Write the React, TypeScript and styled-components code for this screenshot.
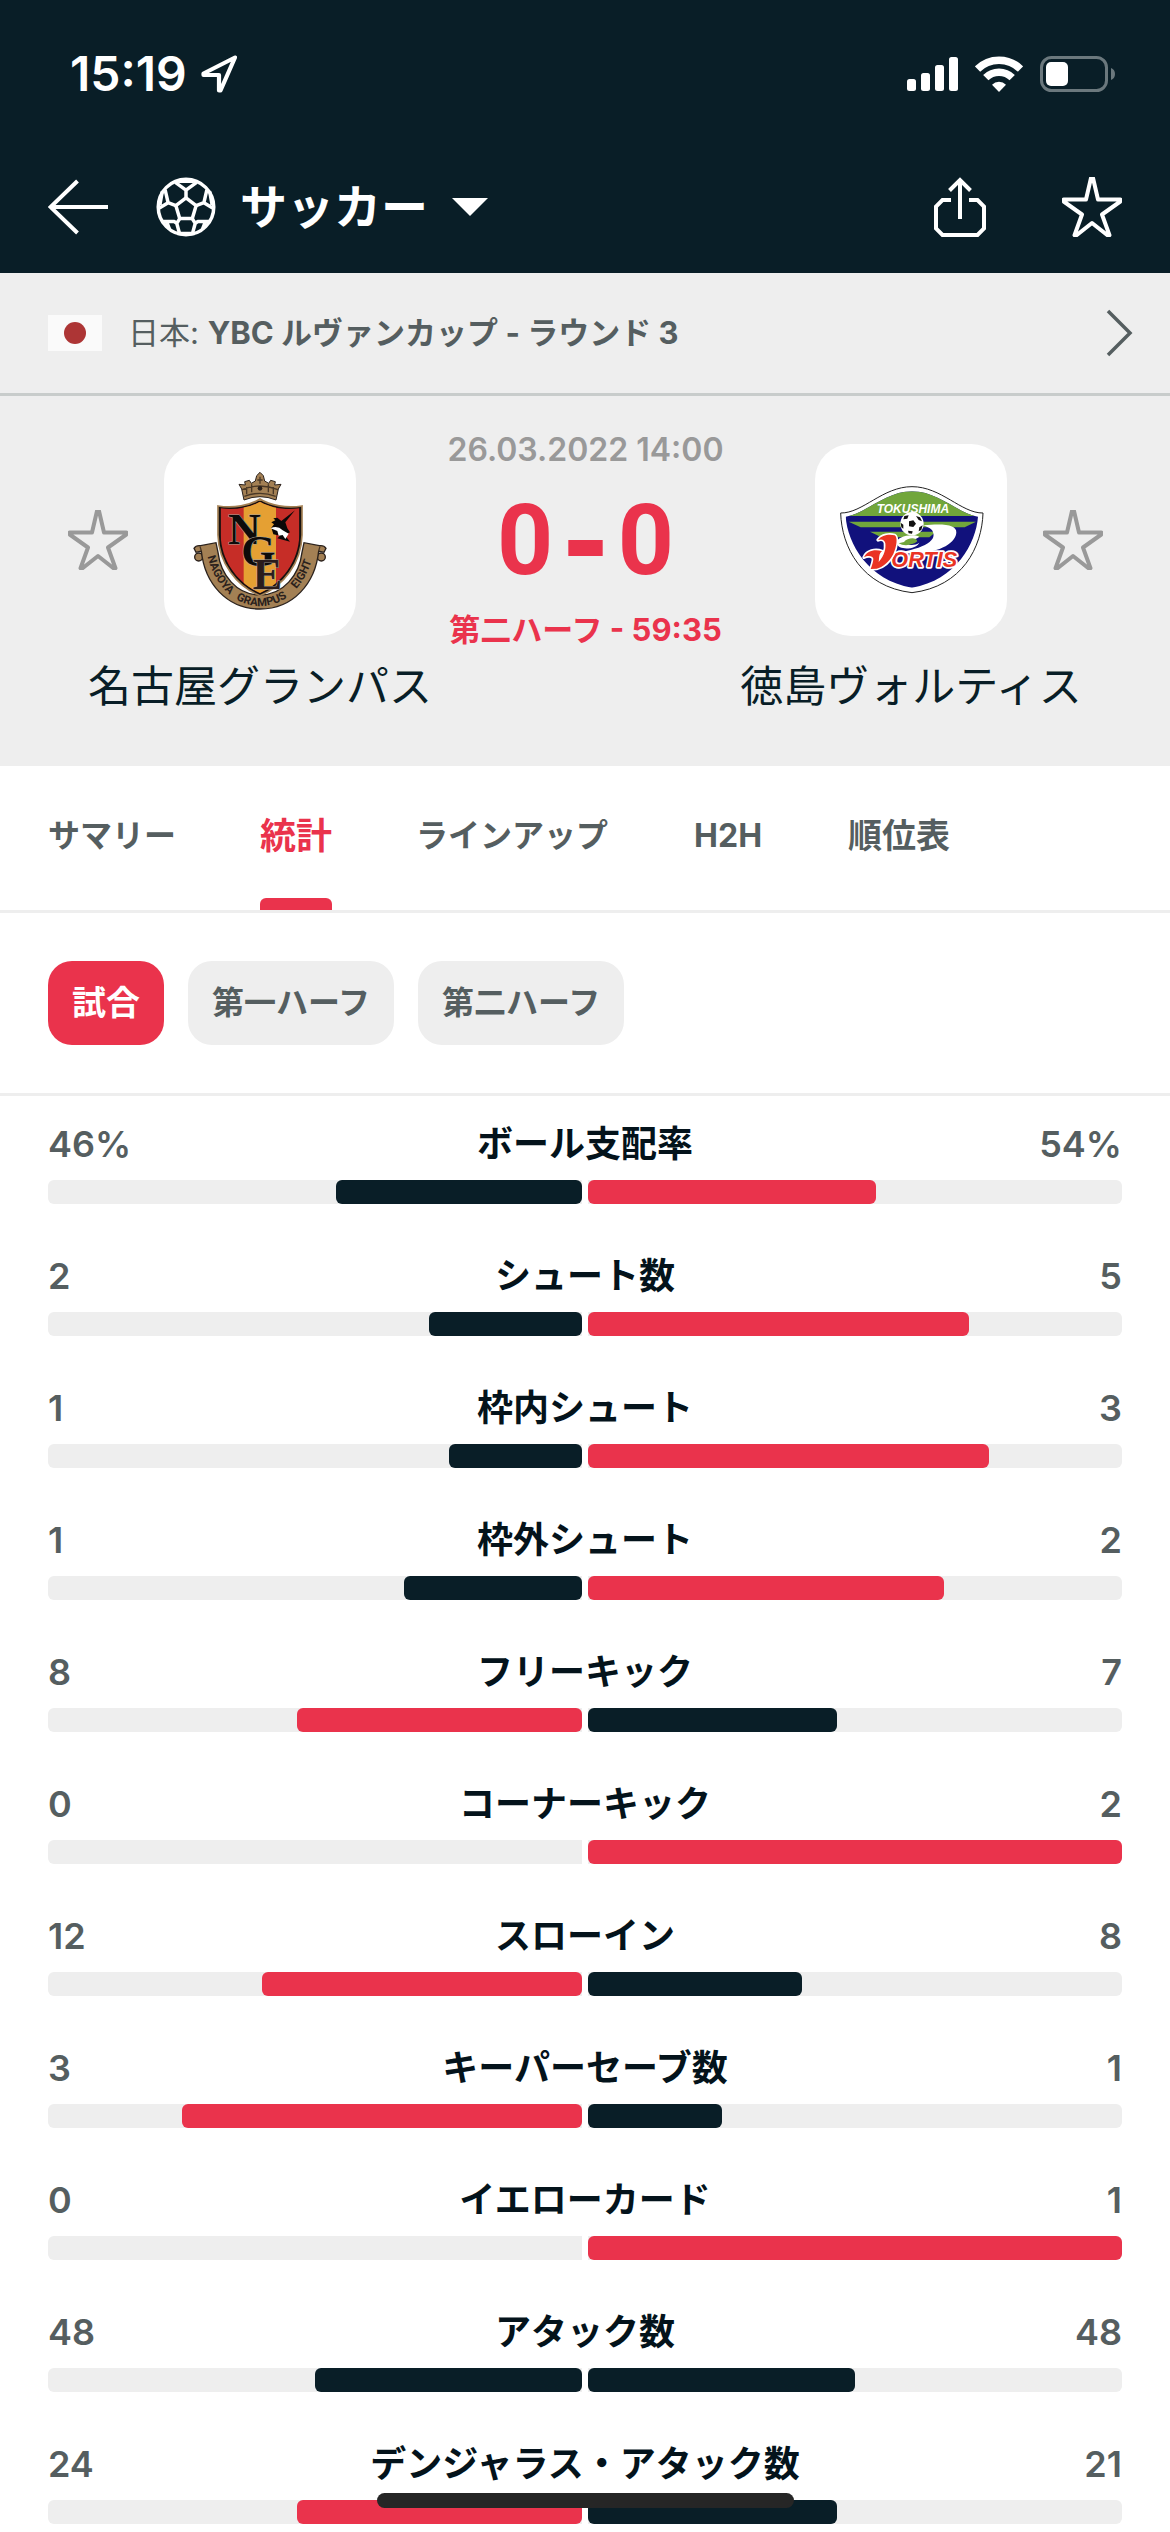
import React, { useState } from "react";
import styled, { createGlobalStyle } from "styled-components";

const color = {
  navy: "#091e27",
  ink: "#04131b",
  red: "#ea334c",
  slate: "#555e60",
  grey: "#999999",
  panel: "#eeeeee",
  rule: "#c8cccb",
  white: "#ffffff",
};

const GlobalStyle = createGlobalStyle`
  * { box-sizing: border-box; }
  body {
    margin: 0;
    background: ${color.white};
    color: ${color.ink};
    font-family: Inter, "Noto Sans CJK JP", sans-serif;
  }
  button {
    margin: 0;
    padding: 0;
    border: 0;
    background: none;
    color: inherit;
    font: inherit;
    cursor: pointer;
  }
  svg { display: block; flex: none; }
`;

const Page = styled.div`
  display: flex;
  flex-direction: column;
  padding-bottom: 8px;
  overflow: hidden;
`;

const Header = styled.header`
  padding-bottom: 8px;
  background: ${color.navy};
  color: ${color.white};
`;

const StatusBar = styled.div`
  display: flex;
  align-items: center;
  justify-content: space-between;
  height: 148px;
  padding: 0 55px 0 70px;
`;

const Clock = styled.div`
  display: flex;
  align-items: center;
  gap: 14px;
  font-size: 48px;
  font-weight: 600;
  line-height: 48px;
`;

const Indicators = styled.div`
  display: flex;
  align-items: center;
  gap: 17px;
`;

const NavBar = styled.nav`
  display: flex;
  align-items: center;
  height: 117px;
  padding: 0 48px;
`;

const SportButton = styled.button`
  display: flex;
  align-items: center;
  margin: 0 auto 0 48px;
  font-size: 47px;
  font-weight: 700;
  line-height: 60px;
  white-space: nowrap;
`;

const SportName = styled.span`
  margin: 0 24px;
`;

const NavActions = styled.div`
  display: flex;
  align-items: center;
  gap: 76px;
`;

const League = styled.a`
  display: flex;
  align-items: center;
  height: 123px;
  padding: 0 36px 0 48px;
  background: ${color.panel};
  border-bottom: 3px solid ${color.rule};
  color: ${color.slate};
  font-size: 31px;
  line-height: 40px;
  text-decoration: none;
`;

const Flag = styled.span`
  display: flex;
  align-items: center;
  justify-content: center;
  width: 54px;
  height: 36px;
  margin-right: 26px;
  background: #fafafa;

  &::before {
    content: "";
    width: 22px;
    height: 22px;
    border-radius: 50%;
    background: #ad3535;
  }
`;

const LeagueName = styled.span`
  flex: 1;
  white-space: nowrap;
`;

const Match = styled.section`
  display: grid;
  grid-template-columns: auto minmax(0, 1fr) auto;
  padding: 0 67px 56px 68px;
  background: ${color.panel};
`;

const Team = styled.div`
  display: grid;
  grid-template-columns: 60px 192px 60px;
  gap: 26px 36px;
  align-items: center;
  padding-top: 48px;
  color: ${color.grey};
`;

const CrestCard = styled.div`
  display: flex;
  align-items: center;
  justify-content: center;
  grid-column: 2;
  grid-row: 1;
  height: 192px;
  border-radius: 36px;
  background: ${color.white};
`;

const Favourite = styled.button<{ $side: "left" | "right" }>`
  grid-column: ${(p) => (p.$side === "left" ? 1 : 3)};
  grid-row: 1;
`;

const TeamName = styled.h2`
  grid-column: 1 / -1;
  margin: 0;
  color: ${color.navy};
  font-size: 43px;
  font-weight: 400;
  line-height: 48px;
  text-align: center;
  white-space: nowrap;
`;

const Center = styled.div`
  display: flex;
  flex-direction: column;
  align-items: center;
  padding-top: 34px;
  font-size: 32px;
  font-weight: 600;
  line-height: 40px;
  white-space: nowrap;
`;

const Kickoff = styled.time`
  color: ${color.grey};
`;

const Score = styled.div`
  display: flex;
  align-items: center;
  gap: 9px;
  margin: 36px 0 34px;
  color: ${color.red};
  font-family: Roboto, sans-serif;
  font-size: 98px;
  font-weight: 700;
  line-height: 70px;
`;

const ScoreDash = styled.span`
  font-family: "DejaVu Sans", sans-serif;
  font-size: 112px;
`;

const Phase = styled.div`
  color: ${color.red};
  font-size: 31px;
  font-weight: 700;
`;

const Tabs = styled.div`
  display: flex;
  gap: 84px;
  height: 147px;
  padding: 0 48px;
  border-bottom: 3px solid ${color.panel};
`;

const Tab = styled.button<{ $active: boolean; $size: number }>`
  display: flex;
  flex-direction: column;
  align-items: center;
  justify-content: space-between;
  min-width: 72px;
  padding-top: 46px;
  color: ${(p) => (p.$active ? color.red : color.slate)};
  font-size: ${(p) => p.$size}px;
  font-weight: 700;
  line-height: 48px;
  white-space: nowrap;

  &::after {
    content: "";
    width: 100%;
    height: 12px;
    border-radius: 6px 6px 0 0;
    background: ${(p) => (p.$active ? color.red : "transparent")};
  }
`;

const Chips = styled.div`
  display: flex;
  gap: 24px;
  padding: 48px;
  border-bottom: 3px solid ${color.panel};
`;

const Chip = styled.button<{ $active: boolean }>`
  height: 84px;
  padding: 0 24px;
  border-radius: 24px;
  background: ${(p) => (p.$active ? color.red : color.panel)};
  color: ${(p) => (p.$active ? color.white : color.slate)};
  font-size: ${(p) => (p.$active ? 34 : 32)}px;
  font-weight: 700;
  line-height: 84px;
  white-space: nowrap;
`;

const Stats = styled.ul`
  display: flex;
  flex-direction: column;
  gap: 48px;
  margin: 0;
  padding: 24px 48px 0;
  list-style: none;
`;

const StatText = styled.div`
  display: grid;
  grid-template-columns: 1fr auto 1fr;
  margin-bottom: 12px;
  font-size: 36px;
  line-height: 48px;
`;

const StatValue = styled.span<{ $end?: boolean }>`
  color: ${color.slate};
  font-weight: 600;
  text-align: ${(p) => (p.$end ? "right" : "left")};
`;

const StatLabel = styled.span`
  font-weight: 700;
  white-space: nowrap;
`;

const Bars = styled.div`
  display: grid;
  grid-template-columns: 1fr 1fr;
  gap: 6px;
`;

const Track = styled.div<{ $side: "home" | "away" }>`
  display: flex;
  justify-content: ${(p) => (p.$side === "home" ? "flex-end" : "flex-start")};
  height: 24px;
  border-radius: ${(p) => (p.$side === "home" ? "6px 0 0 6px" : "0 6px 6px 0")};
  background: ${color.panel};
`;

const Fill = styled.div<{ $lead: boolean }>`
  border-radius: 6px;
  background: ${(p) => (p.$lead ? color.red : color.navy)};
`;

const HomeIndicator = styled.div`
  position: fixed;
  bottom: 24px;
  left: 50%;
  width: 417px;
  height: 15px;
  margin-left: -208px;
  border-radius: 8px;
  background: #262626;
`;

const StarIcon = () => (
  <svg width="60" height="60" viewBox="0 0 60 60" fill="none" stroke="currentColor" strokeWidth="4">
    <path
      d="M29 1h2L36 22.500H58.300V24.500L40 37.500 47.500 58.200 46.500 59 30 46 13.500 59 12.500 58.200 20 37.500 1.700 24.500V22.500H24Z"
      strokeLinejoin="round"
    />
  </svg>
);

const LocationIcon = () => (
  <svg width="37" height="38" viewBox="0 0 37 38" fill="none" stroke="#fff" strokeWidth="4.200" strokeLinejoin="round">
    <path d="M34 2.500 2.500 18.500V20H18V35.500H19.500Z" />
  </svg>
);

const SignalIcon = () => (
  <svg width="51" height="34" viewBox="0 0 51 34" fill="#fff">
    <rect x="0" y="22" width="9" height="12" rx="2.500" />
    <rect x="14" y="16" width="9" height="18" rx="2.500" />
    <rect x="28" y="8" width="9" height="26" rx="2.500" />
    <rect x="42" y="0" width="9" height="34" rx="2.500" />
  </svg>
);

const WifiIcon = () => (
  <svg width="48" height="36" viewBox="0 0 48 36" fill="none" stroke="#fff" strokeWidth="7.500">
    <path d="M2.500 13A30.500 30.500 0 0 1 45.500 13" />
    <path d="M10.800 21.700A18.700 18.700 0 0 1 37.200 21.700" />
    <path d="M17 28.700a10 10 0 0 1 14 0l-7 7.300Z" fill="#fff" stroke="none" />
  </svg>
);

const BatteryIcon = () => (
  <svg width="75" height="36" viewBox="0 0 75 36">
    <rect x="1.500" y="1.500" width="65" height="33" rx="10" fill="none" stroke="#6b787d" strokeWidth="3" />
    <path d="M71 12a6.500 6.500 0 0 1 0 12Z" fill="#6b787d" />
    <rect x="6" y="6" width="22" height="24" rx="5" fill="#fff" />
  </svg>
);

const BackIcon = () => (
  <svg width="60" height="56" viewBox="0 0 60 56" fill="none" stroke="#fff" strokeWidth="4">
    <path d="M2 28H60M29.500 2 2.500 28 29.500 54" />
  </svg>
);

const BallIcon = () => (
  <svg width="60" height="60" viewBox="0 0 62 62" fill="none" stroke="#fff" strokeWidth="3.600" strokeLinejoin="round">
    <circle cx="31" cy="31" r="28.700" />
    <path d="M31 21.500 41.500 29.500 37.500 43H24.500L20.500 29.500Z" />
    <path d="M31 21.500V13.500L20 5.500M31 13.500 42 5.500M23 4.500h16" />
    <path d="M20.500 29.500 12.500 26.500 3.500 32M12.500 26.500 9.500 13.500M6.500 15 4 29" />
    <path d="M41.500 29.500 49.500 26.500 58.500 32M49.500 26.500 52.500 13.500M55.500 15 58 29" />
    <path d="M24.500 43 21.500 48 24.500 59M21.500 48 19 46H6M14 54 11 46" />
    <path d="M37.500 43 40.500 48 37.500 59M40.500 48 43 46H56M48 54 51 46M22 58.500H40" />
  </svg>
);

const CaretIcon = () => (
  <svg width="36" height="18" viewBox="0 0 36 18" fill="#fff">
    <path d="M0 0H36L18 18Z" />
  </svg>
);

const ShareIcon = () => (
  <svg width="52" height="60" viewBox="0 0 52 60" fill="none" stroke="#fff" strokeWidth="4">
    <path d="M17 23H8.500L2 29.500V51.500L8.500 58H43.500L50 51.500V29.500L43.500 23H35" />
    <path d="M26 42V3M15.500 13.500 26 3 36.500 13.500" />
  </svg>
);

const ChevronIcon = () => (
  <svg width="28" height="48" viewBox="0 0 28 48" fill="none" stroke="currentColor" strokeWidth="3.500">
    <path d="M2 2 24 24 2 46" />
  </svg>
);

const NagoyaCrest = () => (
  <svg width="140" height="150" viewBox="0 0 420 450" role="img" aria-label="名古屋グランパス">
    <defs>
      <clipPath id="nagoya-shield">
        <path d="M210 110C180 128 135 136 92 130V210C94 290 145 356 210 384 275 356 326 290 328 210V130C285 136 240 128 210 110Z" />
      </clipPath>
      <path id="nagoya-ribbon" d="M49 256C66 350 126 423 210 423 294 423 354 350 373 256" />
    </defs>
    <g fill="#a38054" stroke="#2a211c" strokeWidth="4">
      <circle cx="26" cy="276" r="12" />
      <circle cx="394" cy="276" r="12" />
      <path d="M12 250Q18 240 32 242L78 233 84 262C92 330 140 390 210 390 280 390 328 330 336 262L342 233 388 242Q402 240 408 250L402 262 386 258C376 355 310 432 210 432 110 432 44 355 34 258L18 262Z" />
      <path d="M162 105 155 72 147 58 166 60 164 50 178 46 184 55 196 48 200 32 210 22 220 32 224 48 236 55 242 46 256 50 254 60 273 58 265 72 258 105Q210 85 162 105Z" strokeWidth="3" />
    </g>
    <g fill="none" stroke="#4a3826" strokeWidth="4">
      <path d="M156 74Q210 52 264 74M163 94Q210 76 257 94M185 58V82M235 58V82M170 66V88M250 66V88M202 45H218M210 35V56" />
      <path d="M34 258 30 244M386 258 390 244" />
    </g>
    <circle cx="210" cy="70" r="7" fill="#2a211c" />
    <path d="M210 102C180 122 130 130 84 123V210C86 294 140 364 210 392 280 364 334 294 336 210V123C290 130 240 122 210 102Z" fill="#17110f" stroke="#a38054" strokeWidth="5" />
    <g clipPath="url(#nagoya-shield)">
      <path fill="#c62d27" d="M80 100H340V390H80Z" />
      <path fill="#e5a033" d="M161 100H258V390H161Z" />
    </g>
    <path d="M315 136 286 172 292 190 300 202 284 210 300 230 262 220 270 212 250 208 244 188 252 178 244 172 256 166 250 160 262 158 274 168Z" fill="#0b0908" />
    <path d="M242 190Q262 180 278 196L296 206 286 222 278 210 266 212 262 198Z" fill="#fff" />
    <g fill="#0d0b0a" stroke="#a7a09a" strokeWidth="3" fontFamily="Liberation Serif, serif" fontWeight="700" paintOrder="stroke">
      <text x="114" y="236" fontSize="136">N</text>
      <text x="154" y="302" fontSize="132">G</text>
      <text x="188" y="372" fontSize="132" fill="#2a1d1c">E</text>
    </g>
    <g fill="#2a211c" fontFamily="Roboto, sans-serif" fontSize="34" fontWeight="700" textAnchor="middle">
      <text><textPath href="#nagoya-ribbon" startOffset="17%">NAGOYA</textPath></text>
      <text><textPath href="#nagoya-ribbon" startOffset="51%">GRAMPUS</textPath></text>
      <text><textPath href="#nagoya-ribbon" startOffset="84%">EIGHT</textPath></text>
    </g>
  </svg>
);

const TokushimaCrest = () => (
  <svg width="150" height="120" viewBox="0 0 450 360" role="img" aria-label="徳島ヴォルティス">
    <defs>
      <clipPath id="tokushima-shield">
        <path d="M29 110C90 100 150 34 228 34S366 100 426 110C420 190 360 300 228 323 96 300 35 190 29 110Z" />
      </clipPath>
    </defs>
    <path d="M14 99C80 100 140 20 228 20S376 100 441 99C438 200 380 320 228 338 76 320 17 200 14 99Z" fill="#fff" stroke="#222" strokeWidth="3" />
    <g clipPath="url(#tokushima-shield)">
      <path fill="#11117c" d="M0 0H450V360H0Z" />
      <path fill="#71a63b" d="M0 0H450V108H0Z" />
      <path fill="#71a63b" d="M38 125H420L386 142H74ZM102 155H300L280 172H136Z" />
    </g>
    <path d="M262 136C330 130 362 136 361 158 358 194 300 220 226 220L150 222C240 214 300 190 292 160 290 146 276 142 262 136Z" fill="#fff" />
    <path d="M250 170C226 160 180 170 182 190 186 212 240 210 250 188 240 196 214 198 214 188 216 178 240 180 250 170Z" fill="#fff" />
    <path d="M188 190C204 200 230 196 244 184 240 170 214 174 204 186Z" fill="#71a63b" />
    <circle cx="228" cy="131" r="35" fill="#fff" />
    <path d="M219 124 232 121 240 131 232 141 219 139ZM205 108 218 106 214 116 202 118ZM240 108 252 112 258 124 248 120ZM194 128 202 134 202 146 196 142ZM216 152 230 154 228 161 218 160ZM250 142 260 136 256 150 248 154Z" fill="#111" />
    <g fontFamily="Liberation Sans, sans-serif" fontStyle="italic" fontWeight="700">
      <text x="122" y="99" fill="#fff" fontSize="36">TOKUSHIMA</text>
      <g fill="#ea3323" stroke="#fff" strokeWidth="10" strokeLinejoin="round" paintOrder="stroke">
        <text x="166" y="262" fontSize="65">ORTIS</text>
        <path d="M84 232C92 212 118 206 138 214 128 220 130 236 128 246 146 226 150 206 148 190 146 178 136 176 126 180 138 164 160 162 176 166 186 172 182 200 172 222 160 246 140 262 122 266L104 267C108 256 112 244 112 236 110 226 94 226 84 232Z" />
      </g>
    </g>
  </svg>
);

type Stat = { label: string; home: number; away: number; unit?: string };

const stats: Stat[] = [
  { label: "ボール支配率", home: 46, away: 54, unit: "%" },
  { label: "シュート数", home: 2, away: 5 },
  { label: "枠内シュート", home: 1, away: 3 },
  { label: "枠外シュート", home: 1, away: 2 },
  { label: "フリーキック", home: 8, away: 7 },
  { label: "コーナーキック", home: 0, away: 2 },
  { label: "スローイン", home: 12, away: 8 },
  { label: "キーパーセーブ数", home: 3, away: 1 },
  { label: "イエローカード", home: 0, away: 1 },
  { label: "アタック数", home: 48, away: 48 },
  { label: "デンジャラス・アタック数", home: 24, away: 21 },
];

const tabs = [
  { name: "サマリー", size: 32 },
  { name: "統計", size: 36 },
  { name: "ラインアップ", size: 32 },
  { name: "H2H", size: 32 },
  { name: "順位表", size: 34 },
];
const periods = ["試合", "第一ハーフ", "第二ハーフ"];

const StatRow = ({ label, home, away, unit = "" }: Stat) => {
  const total = home + away;
  return (
    <li>
      <StatText>
        <StatValue>{`${home}${unit}`}</StatValue>
        <StatLabel>{label}</StatLabel>
        <StatValue $end>{`${away}${unit}`}</StatValue>
      </StatText>
      <Bars>
        <Track $side="home">
          <Fill $lead={home > away} style={{ width: `${(home / total) * 100}%` }} />
        </Track>
        <Track $side="away">
          <Fill $lead={away > home} style={{ width: `${(away / total) * 100}%` }} />
        </Track>
      </Bars>
    </li>
  );
};

export default function App() {
  const [tab, setTab] = useState("統計");
  const [period, setPeriod] = useState("試合");

  return (
    <Page lang="ja">
      <GlobalStyle />
      <Header>
        <StatusBar>
          <Clock>
            15:19
            <LocationIcon />
          </Clock>
          <Indicators>
            <SignalIcon />
            <WifiIcon />
            <BatteryIcon />
          </Indicators>
        </StatusBar>
        <NavBar>
          <button aria-label="戻る">
            <BackIcon />
          </button>
          <SportButton aria-haspopup="listbox">
            <BallIcon />
            <SportName>サッカー</SportName>
            <CaretIcon />
          </SportButton>
          <NavActions>
            <button aria-label="共有">
              <ShareIcon />
            </button>
            <button aria-label="お気に入り">
              <StarIcon />
            </button>
          </NavActions>
        </NavBar>
      </Header>

      <League href="#league">
        <Flag />
        <LeagueName>
          日本: <b>YBC ルヴァンカップ - ラウンド 3</b>
        </LeagueName>
        <ChevronIcon />
      </League>

      <Match>
        <Team>
          <Favourite $side="left" aria-label="名古屋グランパスをお気に入りに追加">
            <StarIcon />
          </Favourite>
          <CrestCard>
            <NagoyaCrest />
          </CrestCard>
          <TeamName>名古屋グランパス</TeamName>
        </Team>
        <Center>
          <Kickoff dateTime="2022-03-26T14:00">26.03.2022 14:00</Kickoff>
          <Score>
            <span>0</span>
            <ScoreDash>-</ScoreDash>
            <span>0</span>
          </Score>
          <Phase>第二ハーフ - 59:35</Phase>
        </Center>
        <Team>
          <CrestCard>
            <TokushimaCrest />
          </CrestCard>
          <Favourite $side="right" aria-label="徳島ヴォルティスをお気に入りに追加">
            <StarIcon />
          </Favourite>
          <TeamName>徳島ヴォルティス</TeamName>
        </Team>
      </Match>

      <Tabs role="tablist">
        {tabs.map(({ name, size }) => (
          <Tab
            key={name}
            role="tab"
            aria-selected={tab === name}
            $active={tab === name}
            $size={size}
            onClick={() => setTab(name)}
          >
            {name}
          </Tab>
        ))}
      </Tabs>

      <Chips>
        {periods.map((name) => (
          <Chip key={name} aria-pressed={period === name} $active={period === name} onClick={() => setPeriod(name)}>
            {name}
          </Chip>
        ))}
      </Chips>

      <Stats>
        {stats.map((stat) => (
          <StatRow key={stat.label} {...stat} />
        ))}
      </Stats>
      <HomeIndicator />
    </Page>
  );
}
